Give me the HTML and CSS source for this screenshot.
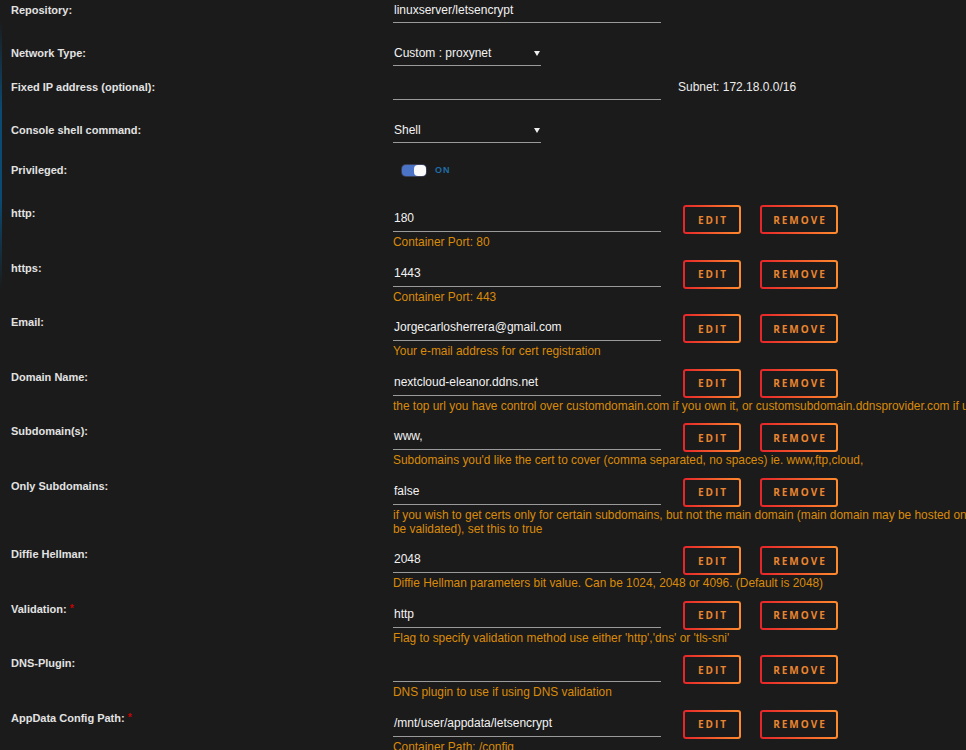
FILE: index.html
```html
<!DOCTYPE html>
<html lang="en">
<head>
    <meta charset="UTF-8">
    <title>Update Container - letsencrypt</title>
    <link rel="stylesheet" href="styles.css">
</head>
<body>
    <div class="form">
        <!-- basic settings -->
        <div class="row basic">
            <div class="label">Repository:</div>
            <div class="input wide">linuxserver/letsencrypt</div>
        </div>
        <div class="row basic short">
            <div class="label">Network Type:</div>
            <div class="input select">Custom : proxynet<span class="caret"></span></div>
        </div>
        <div class="row basic">
            <div class="label">Fixed IP address (optional):</div>
            <div class="input wide"></div>
            <div class="subnet">Subnet: 172.18.0.0/16</div>
        </div>
        <div class="row basic mid">
            <div class="label">Console shell command:</div>
            <div class="input select">Shell<span class="caret"></span></div>
        </div>
        <div class="row basic">
            <div class="label">Privileged:</div>
            <div class="switch"><span class="track"><span class="knob"></span></span>ON</div>
        </div>

        <!-- template config -->
        <div class="row cfg">
            <div class="label">http:</div>
            <div class="field">
                <div class="line">
                    <div class="input wide">180</div>
                    <button class="btn">Edit</button>
                    <button class="btn remove">Remove</button>
                </div>
                <div class="desc">Container Port: 80</div>
            </div>
        </div>
        <div class="row cfg">
            <div class="label">https:</div>
            <div class="field">
                <div class="line">
                    <div class="input wide">1443</div>
                    <button class="btn">Edit</button>
                    <button class="btn remove">Remove</button>
                </div>
                <div class="desc">Container Port: 443</div>
            </div>
        </div>
        <div class="row cfg">
            <div class="label">Email:</div>
            <div class="field">
                <div class="line">
                    <div class="input wide">Jorgecarlosherrera@gmail.com</div>
                    <button class="btn">Edit</button>
                    <button class="btn remove">Remove</button>
                </div>
                <div class="desc">Your e-mail address for cert registration</div>
            </div>
        </div>
        <div class="row cfg">
            <div class="label">Domain Name:</div>
            <div class="field">
                <div class="line">
                    <div class="input wide">nextcloud-eleanor.ddns.net</div>
                    <button class="btn">Edit</button>
                    <button class="btn remove">Remove</button>
                </div>
                <div class="desc">the top url you have control over customdomain.com if you own it, or customsubdomain.ddnsprovider.com if using dynamic dns</div>
            </div>
        </div>
        <div class="row cfg">
            <div class="label">Subdomain(s):</div>
            <div class="field">
                <div class="line">
                    <div class="input wide">www,</div>
                    <button class="btn">Edit</button>
                    <button class="btn remove">Remove</button>
                </div>
                <div class="desc">Subdomains you'd like the cert to cover (comma separated, no spaces) ie. www,ftp,cloud,</div>
            </div>
        </div>
        <div class="row cfg">
            <div class="label">Only Subdomains:</div>
            <div class="field">
                <div class="line">
                    <div class="input wide">false</div>
                    <button class="btn">Edit</button>
                    <button class="btn remove">Remove</button>
                </div>
                <div class="desc">if you wish to get certs only for certain subdomains, but not the main domain (main domain may be hosted on another machine and cannot be validated), set this to true</div>
            </div>
        </div>
        <div class="row cfg">
            <div class="label">Diffie Hellman:</div>
            <div class="field">
                <div class="line">
                    <div class="input wide">2048</div>
                    <button class="btn">Edit</button>
                    <button class="btn remove">Remove</button>
                </div>
                <div class="desc">Diffie Hellman parameters bit value. Can be 1024, 2048 or 4096. (Default is 2048)</div>
            </div>
        </div>
        <div class="row cfg">
            <div class="label">Validation: <span class="req">*</span></div>
            <div class="field">
                <div class="line">
                    <div class="input wide">http</div>
                    <button class="btn">Edit</button>
                    <button class="btn remove">Remove</button>
                </div>
                <div class="desc">Flag to specify validation method use either 'http','dns' or 'tls-sni'</div>
            </div>
        </div>
        <div class="row cfg">
            <div class="label">DNS-Plugin:</div>
            <div class="field">
                <div class="line">
                    <div class="input wide"></div>
                    <button class="btn">Edit</button>
                    <button class="btn remove">Remove</button>
                </div>
                <div class="desc">DNS plugin to use if using DNS validation</div>
            </div>
        </div>
        <div class="row cfg">
            <div class="label">AppData Config Path: <span class="req">*</span></div>
            <div class="field">
                <div class="line">
                    <div class="input wide">/mnt/user/appdata/letsencrypt</div>
                    <button class="btn">Edit</button>
                    <button class="btn remove">Remove</button>
                </div>
                <div class="desc">Container Path: /config</div>
            </div>
        </div>
    </div>
</body>
</html>
```

FILE: styles.css
```css
html, body {
    margin: 0;
    padding: 0;
    overflow: hidden;
}

body {
    background: #1b1b1b;
    color: #e8e8e8;
    font-family: "Liberation Sans", Arial, sans-serif;
    font-size: 12px;
}

.form {
    padding-top: 2px;
    min-height: 748px;
    border-left: 2px solid transparent;
    border-image: linear-gradient(to bottom, transparent 20px, #0b4a72 110px, #0b4a72 200px, transparent 290px) 1;
}

.row {
    display: flex;
    align-items: flex-start;
}

.basic {
    height: 43px;
}

.basic.short {
    height: 34px;
}

.basic.mid {
    height: 40px;
}

.label {
    width: 382px;
    padding-left: 9px;
    flex-shrink: 0;
    line-height: 16px;
    font-weight: bold;
    font-size: 11px;
    color: #e2e2e2;
}

.req {
    color: #c00;
    font-size: 10px;
    vertical-align: top;
}

.input {
    box-sizing: border-box;
    line-height: 16px;
    padding: 0 0 4px 1px;
    border-bottom: 1px solid #9a9a9a;
    color: #f2f2f2;
    min-height: 21px;
}

.wide {
    width: 268px;
    flex-shrink: 0;
}

.select {
    width: 148px;
    display: flex;
    justify-content: space-between;
    align-items: center;
    padding-right: 1px;
}

.caret {
    width: 0;
    height: 0;
    border-left: 3px solid transparent;
    border-right: 3px solid transparent;
    border-top: 5px solid #eee;
    margin-top: 1px;
}

.subnet {
    margin-left: 17px;
    line-height: 16px;
    color: #ececec;
}

.switch {
    display: flex;
    align-items: center;
    height: 16px;
    margin-left: 9px;
    color: #1f6ea8;
    font-weight: bold;
    font-size: 9px;
    letter-spacing: 1px;
}

.track {
    display: flex;
    justify-content: flex-end;
    width: 24px;
    height: 11px;
    margin-right: 9px;
    border-radius: 4px;
    background: #4b74c6;
    box-shadow: 0 0 0 1px #3a3f55;
}

.knob {
    width: 12px;
    height: 11px;
    border-radius: 4px;
    background: #fafafa;
}

/* config rows */
.cfg {
    padding-bottom: 10.5px;
}

.field {
    min-width: 0;
}

.line {
    display: flex;
    align-items: flex-start;
}

.line .input {
    padding-top: 5px;
    padding-bottom: 5px;
    min-height: 27px;
}

.btn {
    box-sizing: border-box;
    width: 58px;
    height: 29px;
    margin-left: 22px;
    padding: 0 0 0 2px;
    border: 2px solid transparent;
    border-radius: 3px;
    background: linear-gradient(#1b1b1b, #1b1b1b) padding-box,
                linear-gradient(to right, #e5252a, #ff8b2e) border-box;
    color: #ea8530;
    font-family: "Open Sans", sans-serif;
    font-size: 10px;
    font-weight: bold;
    letter-spacing: 2px;
    text-transform: uppercase;
    cursor: pointer;
}

.btn.remove {
    width: 78px;
    margin-left: 19px;
}

.desc {
    width: 738px;
    margin-top: 1px;
    line-height: 14px;
    font-size: 11.9px;
    color: #d98a08;
}
```
